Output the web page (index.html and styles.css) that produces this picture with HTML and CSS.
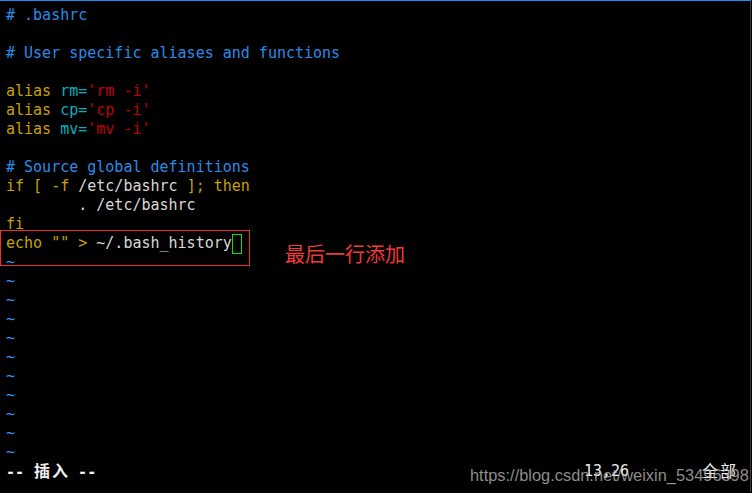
FILE: index.html
```html
<!DOCTYPE html>
<html lang="zh">
<head>
<meta charset="utf-8">
<link rel="stylesheet" href="styles.css">
</head>
<body>
<div class="term">
  <div class="row"><span class="c">#&nbsp;.bashrc</span></div>
  <div class="row"></div>
  <div class="row"><span class="c"># User specific aliases and functions</span></div>
  <div class="row"></div>
  <div class="row"><span class="y">alias</span> <span class="cy">rm=</span><span class="r">'rm -i'</span></div>
  <div class="row"><span class="y">alias</span> <span class="cy">cp=</span><span class="r">'cp -i'</span></div>
  <div class="row"><span class="y">alias</span> <span class="cy">mv=</span><span class="r">'mv -i'</span></div>
  <div class="row"></div>
  <div class="row"><span class="c"># Source global definitions</span></div>
  <div class="row"><span class="y">if [ -f</span> /etc/bashrc <span class="y">]; then</span></div>
  <div class="row">        . /etc/bashrc</div>
  <div class="row"><span class="y">fi</span></div>
  <div class="marked">
    <div class="row"><span class="y">echo "" &gt;</span> ~/.bash_history<span class="cursor"></span></div>
    <div class="row"><span class="t">~</span></div>
    <div class="box"></div>
    <div class="note">最后一行添加</div>
  </div>
  <div class="row"><span class="t">~</span></div>
  <div class="row"><span class="t">~</span></div>
  <div class="row"><span class="t">~</span></div>
  <div class="row"><span class="t">~</span></div>
  <div class="row"><span class="t">~</span></div>
  <div class="row"><span class="t">~</span></div>
  <div class="row"><span class="t">~</span></div>
  <div class="row"><span class="t">~</span></div>
  <div class="row"><span class="t">~</span></div>
  <div class="row"><span class="t">~</span></div>
  <div class="status">
    <span class="mode">-- <span class="wide">插</span><span class="wide">入</span> --</span>
    <span class="pos">13,26</span>
    <span class="all"><span class="wide">全</span><span class="wide">部</span></span>
  </div>
  <div class="wm">https://blog.csdn.net/weixin_53496398</div>
</div>
</body>
</html>
```

FILE: styles.css
```css
html, body {
  margin: 0;
  padding: 0;
  background: #000;
}
.term {
  position: relative;
  width: 751px;
  height: 492px;
  border-top: 1px solid #1e8cf0;
  border-right: 1px solid #3a3a3a;
  padding: 5px 0 0 6px;
  box-sizing: border-box;
  background: #000;
  color: #d8d8d8;
  font-family: "DejaVu Sans Mono", "Noto Sans CJK SC", monospace;
  font-size: 15px;
  line-height: 19px;
  overflow: hidden;
}
.row {
  height: 19px;
  white-space: pre;
}
.c { color: #2a8ce8; }
.y { color: #c8a200; }
.cy { color: #06b0bc; }
.r { color: #c20000; }
.t { color: #3596f0; }
.cursor {
  display: inline-block;
  width: 10px;
  height: 20px;
  border: 1px solid #10e010;
  box-sizing: border-box;
  vertical-align: top;
}
.marked {
  position: relative;
}
.box {
  position: absolute;
  left: -6px;
  top: -4px;
  width: 250px;
  height: 36px;
  border: 1px solid #f03030;
  box-sizing: border-box;
}
.note {
  position: absolute;
  left: 279px;
  top: 7px;
  font-family: "Noto Sans CJK SC", sans-serif;
  font-size: 20px;
  line-height: 26px;
  color: #f03a3a;
  white-space: nowrap;
}
.status {
  height: 19px;
  display: grid;
  grid-template-columns: 578px 117px auto;
  white-space: pre;
  color: #f0f0f0;
}
.mode { font-weight: bold; }
.wide {
  display: inline-block;
  width: 18px;
  font-size: 16px;
  text-align: center;
}
.wm {
  position: absolute;
  left: 470px;
  top: 463px;
  font-family: "Liberation Sans", Arial, sans-serif;
  font-size: 16.4px;
  line-height: 22px;
  color: rgba(190, 190, 190, 0.75);
  white-space: nowrap;
}
```
